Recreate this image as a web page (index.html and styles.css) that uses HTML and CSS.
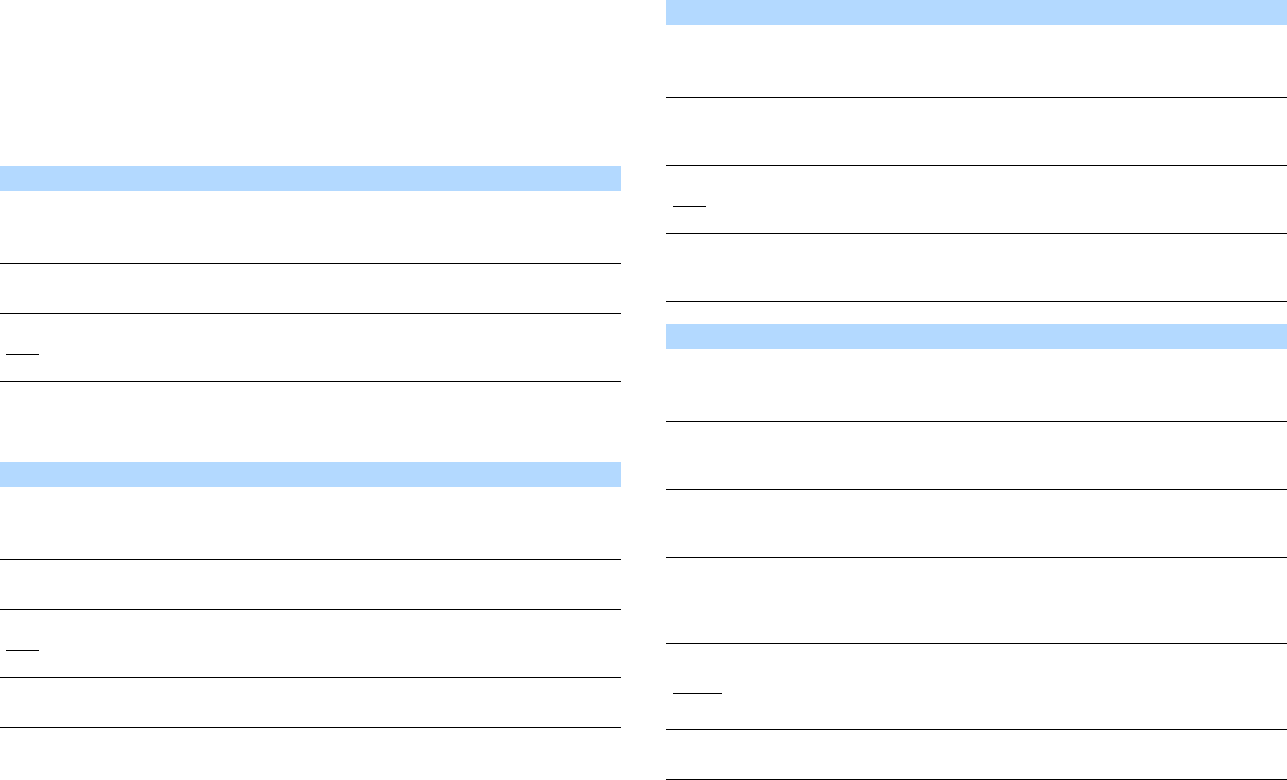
FILE: index.html
```html
<!DOCTYPE html>
<html lang="en">
<head>
<meta charset="utf-8">
<title>Tables</title>
<link rel="stylesheet" href="styles.css">
</head>
<body>
<div class="page">
  <div class="col col-left">
    <section class="table">
      <div class="head"></div>
      <div class="row h73"></div>
      <div class="row h50"></div>
      <div class="row h68"><span class="link"></span></div>
    </section>
    <section class="table second">
      <div class="head"></div>
      <div class="row h73"></div>
      <div class="row h50"></div>
      <div class="row h68"><span class="link"></span></div>
      <div class="row h50"></div>
    </section>
  </div>
  <div class="col col-right">
    <section class="table">
      <div class="head"></div>
      <div class="row h73"></div>
      <div class="row h68"></div>
      <div class="row h68"><span class="link"></span></div>
      <div class="row h68"></div>
    </section>
    <section class="table third">
      <div class="head"></div>
      <div class="row h73"></div>
      <div class="row h68"></div>
      <div class="row h68"></div>
      <div class="row h86"></div>
      <div class="row h86"><span class="link wide"></span></div>
      <div class="row h50"></div>
    </section>
  </div>
</div>
</body>
</html>
```

FILE: styles.css
```css
html, body {
  margin: 0;
  padding: 0;
  background: #ffffff;
  font-family: "Liberation Sans", Arial, sans-serif;
  font-size: 13px;
  color: #000;
  overflow: hidden;
}

.page {
  display: flex;
  gap: 45px;
  width: 1287px;
  height: 780px;
}

.col {
  display: flex;
  flex-direction: column;
  flex: 0 0 auto;
}

.col-left {
  width: 621px;
  padding-top: 166px;
}

.col-right {
  width: 621px;
}

.table {
  display: flex;
  flex-direction: column;
}

.table.second {
  margin-top: 80px;
}

.table.third {
  margin-top: 22px;
}

.head {
  height: 25px;
  background: #b3d9ff;
}

.row {
  box-sizing: border-box;
  display: flex;
  align-items: center;
  border-bottom: 1px solid #000;
  padding-left: 6px;
}

.h50 { height: 50px; }
.h68 { height: 68px; }
.h73 { height: 73px; }
.h86 { height: 86px; }

.link {
  display: block;
  width: 33px;
  height: 14px;
  box-sizing: border-box;
  border-bottom: 1.5px solid #000;
}

.col-right .link {
  margin-left: 1px;
}

.link.wide {
  width: 49px;
}
```
